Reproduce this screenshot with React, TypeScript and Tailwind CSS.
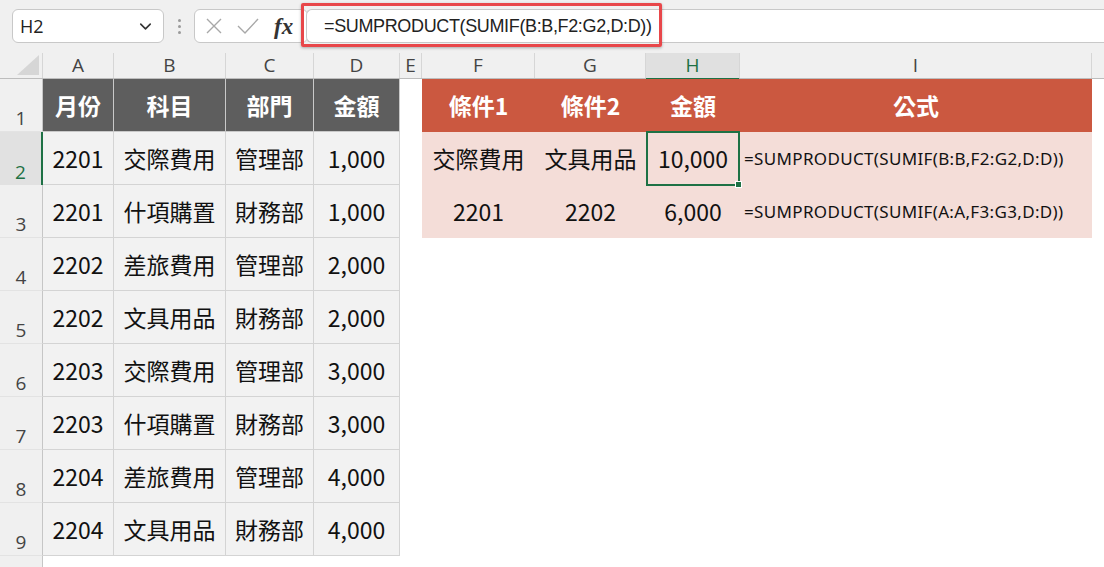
import { ChevronDown } from "lucide-react";

const colHeads = [
  { k: "A", w: "w-[71px]" },
  { k: "B", w: "w-[112px]" },
  { k: "C", w: "w-[88px]" },
  { k: "D", w: "w-[86px]" },
  { k: "E", w: "w-[22px]" },
  { k: "F", w: "w-[113px]" },
  { k: "G", w: "w-[111px]" },
  { k: "H", w: "w-[94px]" },
  { k: "I", w: "w-[352px]" },
];

const leftWidths = ["w-[71px]", "w-[112px]", "w-[88px]", "w-[86px]"];

const ledger = [
  ["2201", "交際費用", "管理部", "1,000"],
  ["2201", "什項購置", "財務部", "1,000"],
  ["2202", "差旅費用", "管理部", "2,000"],
  ["2202", "文具用品", "財務部", "2,000"],
  ["2203", "交際費用", "管理部", "3,000"],
  ["2203", "什項購置", "財務部", "3,000"],
  ["2204", "差旅費用", "管理部", "4,000"],
  ["2204", "文具用品", "財務部", "4,000"],
];

const lookup = [
  ["交際費用", "文具用品", "10,000", "=SUMPRODUCT(SUMIF(B:B,F2:G2,D:D))"],
  ["2201", "2202", "6,000", "=SUMPRODUCT(SUMIF(A:A,F3:G3,D:D))"],
];

const cjk = "font-['Noto_Sans_CJK_TC','Noto_Sans',sans-serif]";

function RowHead({ n, active }: { n: number; active?: boolean }) {
  return (
    <div
      className={`w-[43px] h-full shrink-0 flex items-end justify-center pb-[3px] text-[19px] leading-none font-['Open_Sans',sans-serif] ${
        active
          ? "bg-[#e1e1e1] text-[#1e7145] border-r-2 border-[#1e7145]"
          : "bg-[#f0f0f0] text-[#444] border-r border-[#c6c6c6] border-b border-b-[#e3e3e3]"
      }`}
    >
      {n}
    </div>
  );
}

function Toolbar() {
  return (
    <div className="relative h-[53px] bg-[#f0f0f0] flex items-start pt-[9px]">
      <div className="ml-[12px] w-[152px] h-[34px] bg-white border border-[#c8c8c8] rounded-[6px] flex items-center justify-between pl-[7px] pr-[8px]">
        <span className="text-[18px] text-[#222] font-['Open_Sans',sans-serif]">H2</span>
        <ChevronDown size={19} strokeWidth={2} className="text-[#333]" />
      </div>
      <div className="w-[30px] h-[34px] flex flex-col items-center justify-center gap-[3px]">
        <span className="w-[3px] h-[3px] rounded-full bg-[#9a9a9a]" />
        <span className="w-[3px] h-[3px] rounded-full bg-[#9a9a9a]" />
        <span className="w-[3px] h-[3px] rounded-full bg-[#9a9a9a]" />
      </div>
      <div className="w-[114px] h-[34px] bg-white border border-[#c8c8c8] rounded-[6px] flex items-center pl-[9px] gap-[12px]">
        <svg width="20" height="20" viewBox="0 0 20 20" fill="none" stroke="#a8a8a8" strokeWidth="1.4">
          <path d="M3 3 L17 17 M17 3 L3 17" />
        </svg>
        <svg width="24" height="20" viewBox="0 0 24 20" fill="none" stroke="#a8a8a8" strokeWidth="1.4">
          <path d="M2 10 L9 17 L22 3" />
        </svg>
        <span className="text-[23px] leading-none italic font-bold text-[#333] font-['Liberation_Serif',serif] ml-[2px]">
          fx
        </span>
      </div>
      <div className="ml-[-2px] flex-1 h-[34px] bg-white border border-r-0 border-[#c8c8c8] rounded-l-[6px] flex items-center pl-[17px]">
        <span className="text-[18px] text-[#222] tracking-[-0.02em] font-['Liberation_Sans',sans-serif]">
          =SUMPRODUCT(SUMIF(B:B,F2:G2,D:D))
        </span>
      </div>
      <div className="absolute left-[301px] top-[3px] w-[361px] h-[44px] border-[3px] border-[#e8474a] rounded-[2px] shadow-[0_1px_3px_rgba(0,0,0,0.3)]" />
    </div>
  );
}

function ColumnHeads() {
  return (
    <div className="h-[26px] flex bg-[#f0f0f0] border-b border-[#bdbdbd]">
      <div className="w-[43px] shrink-0 border-r border-[#d6d6d6] flex items-end justify-end p-[3px]">
        <svg width="22" height="20" viewBox="0 0 22 20">
          <polygon points="22,0 22,20 0,20" fill="#d6d6d6" />
        </svg>
      </div>
      {colHeads.map((c) => (
        <div
          key={c.k}
          className={`${c.w} shrink-0 flex items-center justify-center text-[19px] leading-none font-['Open_Sans',sans-serif] ${
            c.k === "H"
              ? "bg-[#e0e0e0] text-[#1e7145] border-b-2 border-[#1e7145] border-r border-r-[#d6d6d6] h-[27px]"
              : "text-[#444] border-r border-[#d6d6d6]"
          }`}
        >
          {c.k}
        </div>
      ))}
      <div className="flex-1" />
    </div>
  );
}

export default function App() {
  return (
    <div className="w-[1104px] h-[567px] overflow-hidden bg-white select-none">
      <Toolbar />
      <ColumnHeads />

      {/* row 1: headers */}
      <div className="h-[53px] flex">
        <RowHead n={1} />
        {["月份", "科目", "部門", "金額"].map((t, i) => (
          <div
            key={t}
            className={`${leftWidths[i]} shrink-0 bg-[#5e5e5e] text-white font-bold text-[23px] ${cjk} flex items-center justify-center border-r border-b border-[#c9c9c9]`}
          >
            {t}
          </div>
        ))}
        <div className="w-[22px] shrink-0" />
        <div className={`w-[670px] shrink-0 flex bg-[#cb5840] text-white font-bold text-[23px] ${cjk}`}>
          <div className="w-[113px] flex items-center justify-center">條件1</div>
          <div className="w-[111px] flex items-center justify-center">條件2</div>
          <div className="w-[94px] flex items-center justify-center">金額</div>
          <div className="w-[352px] flex items-center justify-center">公式</div>
        </div>
      </div>

      {ledger.map((r, ri) => (
        <div key={ri} className="h-[53px] flex">
          <RowHead n={ri + 2} active={ri === 0} />
          {r.map((v, ci) => (
            <div
              key={ci}
              className={`${leftWidths[ci]} shrink-0 bg-[#f2f2f2] text-[#111] text-[23px] ${cjk} flex items-center justify-center border-r border-b border-[#d4d4d4]`}
            >
              {v}
            </div>
          ))}
          <div className="w-[22px] shrink-0" />
          {ri < 2 && (
            <div className={`w-[670px] shrink-0 flex bg-[#f4ddd8] text-[#111] text-[23px] ${cjk}`}>
              <div className="w-[113px] flex items-center justify-center">{lookup[ri][0]}</div>
              <div className="w-[111px] flex items-center justify-center">{lookup[ri][1]}</div>
              <div className="relative w-[94px] flex items-center justify-center">
                {lookup[ri][2]}
                {ri === 0 && (
                  <div className="absolute left-0 -top-px w-[94px] h-[55px] border-2 border-[#1e7145]">
                    <span className="absolute -right-[4px] -bottom-[4px] w-[7px] h-[7px] bg-[#1e7145] border border-white" />
                  </div>
                )}
              </div>
              <div className="w-[352px] flex items-center pl-[4px] text-[17px] tracking-[0.02em] font-['Noto_Sans',sans-serif]">
                {lookup[ri][3]}
              </div>
            </div>
          )}
        </div>
      ))}

      <div className="h-[20px] flex">
        <div className="w-[43px] bg-[#f0f0f0] border-r border-[#c6c6c6]" />
      </div>
    </div>
  );
}
